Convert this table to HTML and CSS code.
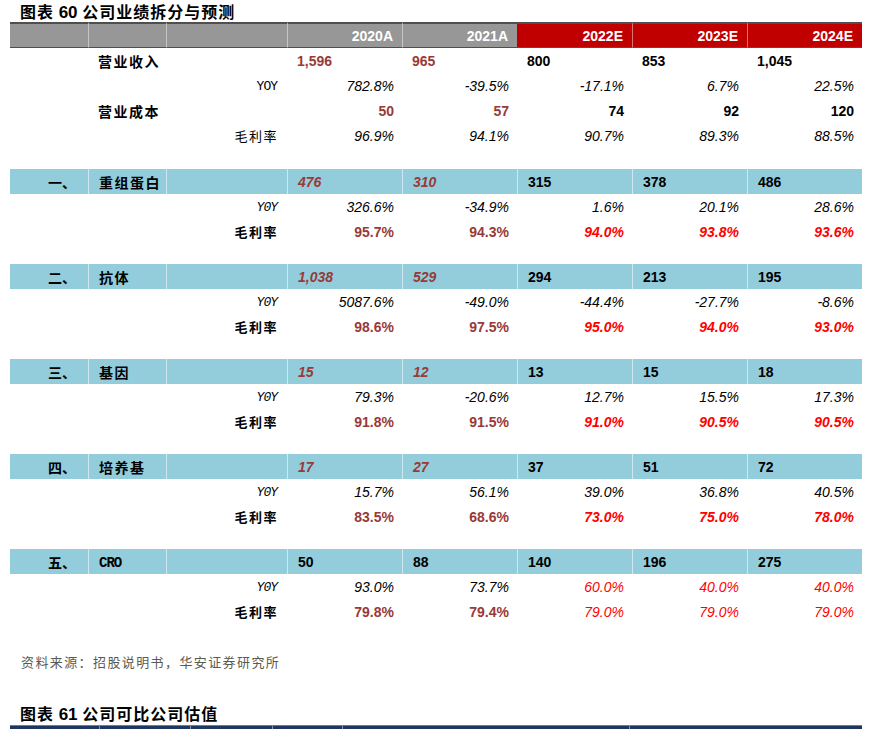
FILE: index.html
```html
<!DOCTYPE html>
<html lang="zh-CN">
<head>
<meta charset="utf-8">
<title>公司业绩拆分与预测</title>
<link rel="stylesheet" href="styles.css">
</head>
<body>
<div class="page">
  <h2 class="fig-title"><span class="fig-tag">图表</span> <span class="fig-num">60</span> 公司业绩拆分与预测</h2>
  <table class="fc">
    <colgroup>
      <col class="c1"><col class="c2"><col class="c3">
      <col class="cn"><col class="cn"><col class="cn"><col class="cn"><col class="cn">
    </colgroup>
    <thead>
      <tr>
        <th class="g"></th><th class="g"></th><th class="g"></th>
        <th class="g">2020A</th><th class="g">2021A</th>
        <th class="e">2022E</th><th class="e">2023E</th><th class="e">2024E</th>
      </tr>
    </thead>
    <tbody>
      <tr>
        <td></td><td class="lab b">营业收入</td><td></td>
        <td class="l b dr">1,596</td><td class="l b dr">965</td>
        <td class="l b">800</td><td class="l b">853</td><td class="l b">1,045</td>
      </tr>
      <tr>
        <td></td><td></td><td class="sub mono">YOY</td>
        <td class="r i">782.8%</td><td class="r i">-39.5%</td>
        <td class="r i">-17.1%</td><td class="r i">6.7%</td><td class="r i">22.5%</td>
      </tr>
      <tr>
        <td></td><td class="lab b">营业成本</td><td></td>
        <td class="r b dr">50</td><td class="r b dr">57</td>
        <td class="r b">74</td><td class="r b">92</td><td class="r b">120</td>
      </tr>
      <tr>
        <td></td><td></td><td class="sub cjk">毛利率</td>
        <td class="r i">96.9%</td><td class="r i">94.1%</td>
        <td class="r i">90.7%</td><td class="r i">89.3%</td><td class="r i">88.5%</td>
      </tr>
      <tr class="gap first"><td colspan="8"></td></tr>

      <tr class="band">
        <td class="num-lab">一、</td><td class="lab b">重组蛋白</td><td></td>
        <td class="l b i dr">476</td><td class="l b i dr">310</td>
        <td class="l b">315</td><td class="l b">378</td><td class="l b">486</td>
      </tr>
      <tr>
        <td></td><td></td><td class="sub mono i">Y0Y</td>
        <td class="r i">326.6%</td><td class="r i">-34.9%</td>
        <td class="r i">1.6%</td><td class="r i">20.1%</td><td class="r i">28.6%</td>
      </tr>
      <tr>
        <td></td><td></td><td class="sub cjk b">毛利率</td>
        <td class="r b dr">95.7%</td><td class="r b dr">94.3%</td>
        <td class="r b i red">94.0%</td><td class="r b i red">93.8%</td><td class="r b i red">93.6%</td>
      </tr>
      <tr class="gap"><td colspan="8"></td></tr>

      <tr class="band">
        <td class="num-lab">二、</td><td class="lab b">抗体</td><td></td>
        <td class="l b i dr">1,038</td><td class="l b i dr">529</td>
        <td class="l b">294</td><td class="l b">213</td><td class="l b">195</td>
      </tr>
      <tr>
        <td></td><td></td><td class="sub mono i">Y0Y</td>
        <td class="r i">5087.6%</td><td class="r i">-49.0%</td>
        <td class="r i">-44.4%</td><td class="r i">-27.7%</td><td class="r i">-8.6%</td>
      </tr>
      <tr>
        <td></td><td></td><td class="sub cjk b">毛利率</td>
        <td class="r b dr">98.6%</td><td class="r b dr">97.5%</td>
        <td class="r b i red">95.0%</td><td class="r b i red">94.0%</td><td class="r b i red">93.0%</td>
      </tr>
      <tr class="gap"><td colspan="8"></td></tr>

      <tr class="band">
        <td class="num-lab">三、</td><td class="lab b">基因</td><td></td>
        <td class="l b i dr">15</td><td class="l b i dr">12</td>
        <td class="l b">13</td><td class="l b">15</td><td class="l b">18</td>
      </tr>
      <tr>
        <td></td><td></td><td class="sub mono i">Y0Y</td>
        <td class="r i">79.3%</td><td class="r i">-20.6%</td>
        <td class="r i">12.7%</td><td class="r i">15.5%</td><td class="r i">17.3%</td>
      </tr>
      <tr>
        <td></td><td></td><td class="sub cjk b">毛利率</td>
        <td class="r b dr">91.8%</td><td class="r b dr">91.5%</td>
        <td class="r b i red">91.0%</td><td class="r b i red">90.5%</td><td class="r b i red">90.5%</td>
      </tr>
      <tr class="gap"><td colspan="8"></td></tr>

      <tr class="band">
        <td class="num-lab">四、</td><td class="lab b">培养基</td><td></td>
        <td class="l b i dr">17</td><td class="l b i dr">27</td>
        <td class="l b">37</td><td class="l b">51</td><td class="l b">72</td>
      </tr>
      <tr>
        <td></td><td></td><td class="sub mono i">Y0Y</td>
        <td class="r i">15.7%</td><td class="r i">56.1%</td>
        <td class="r i">39.0%</td><td class="r i">36.8%</td><td class="r i">40.5%</td>
      </tr>
      <tr>
        <td></td><td></td><td class="sub cjk b">毛利率</td>
        <td class="r b dr">83.5%</td><td class="r b dr">68.6%</td>
        <td class="r b i red">73.0%</td><td class="r b i red">75.0%</td><td class="r b i red">78.0%</td>
      </tr>
      <tr class="gap"><td colspan="8"></td></tr>

      <tr class="band">
        <td class="num-lab">五、</td><td class="lab b mono-lab">CRO</td><td></td>
        <td class="l b">50</td><td class="l b">88</td>
        <td class="l b">140</td><td class="l b">196</td><td class="l b">275</td>
      </tr>
      <tr>
        <td></td><td></td><td class="sub mono i">Y0Y</td>
        <td class="r i">93.0%</td><td class="r i">73.7%</td>
        <td class="r i red">60.0%</td><td class="r i red">40.0%</td><td class="r i red">40.0%</td>
      </tr>
      <tr>
        <td></td><td></td><td class="sub cjk b">毛利率</td>
        <td class="r b dr">79.8%</td><td class="r b dr">79.4%</td>
        <td class="r i red">79.0%</td><td class="r i red">79.0%</td><td class="r i red">79.0%</td>
      </tr>
    </tbody>
  </table>

  <p class="source">资料来源：招股说明书，华安证券研究所</p>

  <h2 class="fig-title next"><span class="fig-tag">图表</span> <span class="fig-num">61</span> 公司可比公司估值</h2>
  <div class="navy-bar">
    <span class="nb s1"></span><span class="nb s2"></span><span class="nb s3"></span><span class="nb s4"></span><span class="nb s5"></span><span class="nb s6"></span>
  </div>
</div>
</body>
</html>
```

FILE: styles.css
```css
* { box-sizing: border-box; }

html, body {
  margin: 0;
  padding: 0;
  background: #ffffff;
}

body {
  font-family: "Liberation Sans", Arial, "Noto Sans CJK SC", sans-serif;
  color: #000;
  width: 878px;
  height: 729px;
  overflow: hidden;
}

.page {
  padding-left: 10px;
  width: 862px;
}

.fig-title {
  margin: 0;
  height: 22px;
  line-height: 22px;
  padding-left: 10px;
  font-family: "Noto Sans CJK SC", sans-serif;
  font-size: 16px;
  font-weight: 700;
  letter-spacing: 1px;
  white-space: nowrap;
  overflow: hidden;
}

.fig-num {
  font-family: "Liberation Sans", Arial, sans-serif;
  font-size: 17px;
  letter-spacing: 0;
}

.fc {
  border-collapse: separate;
  border-spacing: 0;
  table-layout: fixed;
  width: 852px;
}

.c1 { width: 78px; }
.c2 { width: 78px; }
.c3 { width: 121px; }
.cn { width: 115px; }

.fc th {
  height: 26px;
  line-height: 18px;
  border-top: 2px solid #4f4f4f;
  border-bottom: 1px solid #4f4f4f;
  color: #fff;
  font-size: 14px;
  font-weight: 700;
  text-align: right;
  padding: 0 9px 0 0;
  border-left: 1px solid rgba(255, 255, 255, 0.45);
}
.fc th:first-child { border-left: 0; }

.fc th.g { background: #979797; }
.fc th.e { background: #c00000; }
.fc th.g + th.e { border-left: 0; }

.fc td {
  height: 25px;
  line-height: 16px;
  padding: 0;
  font-size: 14px;
  white-space: nowrap;
  vertical-align: middle;
}

.fc tr.gap td { height: 20px; }
.fc tr.gap.first td { height: 21px; }

.fc tr.band td {
  background: #93cddc;
  border-left: 1px solid rgba(255, 255, 255, 0.55);
  height: 25px;
}
.fc tr.band td:first-child { border-left: 0; }

.l { text-align: left; padding-left: 10px !important; }
.r { text-align: right; padding-right: 8px !important; }
.b { font-weight: 700; }
.i { font-style: italic; }
.dr { color: #983a38; }
.red { color: #ff0000; }

.lab {
  font-family: "Noto Sans CJK SC", sans-serif;
  font-size: 13px;
  letter-spacing: 1.5px;
  padding-left: 10px !important;
}

.mono-lab {
  font-family: "Liberation Mono", "DejaVu Sans Mono", monospace;
  font-size: 13px;
  letter-spacing: -1px;
  padding-top: 2px !important;
}

.num-lab {
  font-family: "Noto Sans CJK SC", sans-serif;
  font-size: 13px;
  font-weight: 700;
  text-align: right;
  padding-right: 12px !important;
}

.sub {
  text-align: right;
  padding-right: 10px !important;
}

.sub.mono {
  font-family: "Liberation Mono", "DejaVu Sans Mono", monospace;
  font-size: 13px;
  letter-spacing: -1px;
  padding-top: 3px !important;
}

.sub.cjk {
  font-family: "Noto Sans CJK SC", sans-serif;
  font-size: 13px;
  letter-spacing: 1.5px;
  padding-right: 9px !important;
}

.source {
  margin: 28px 0 0 0;
  padding-left: 11px;
  height: 20px;
  line-height: 20px;
  font-family: "Noto Sans CJK SC", sans-serif;
  font-size: 13px;
  letter-spacing: 1.4px;
  color: #5a5a52;
}

.fig-title.next {
  margin-top: 30px;
}

.navy-bar {
  margin-top: 1px;
  height: 10px;
  width: 852px;
  background: #1f3760;
  border-top: 1px solid #7a7a7a;
  display: flex;
}

.nb {
  height: 100%;
  border-right: 1px solid #8a93a8;
}
.s1 { width: 90px; }
.s2 { width: 91px; }
.s3 { width: 82px; }
.s4 { width: 70px; }
.s5 { width: 287px; }
.s6 { flex: 1; border-right: 0; }
```
